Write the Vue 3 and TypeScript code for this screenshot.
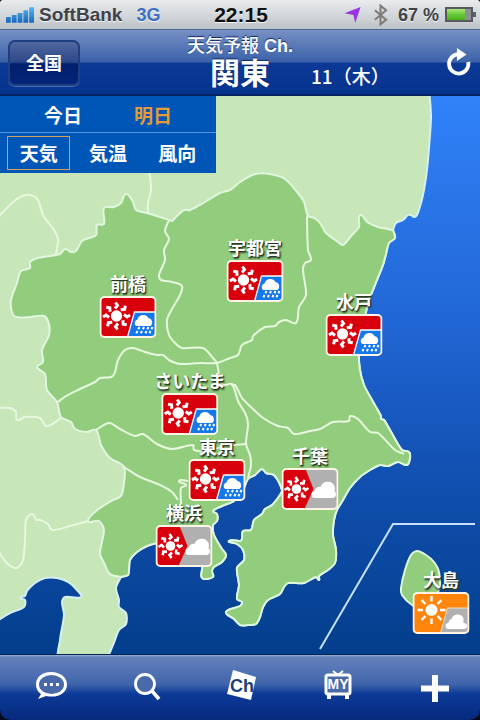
<script setup lang="ts">
import { ref } from 'vue'

type Weather = 'sun-rain' | 'sun-cloud' | 'fine-cloud'
interface City { name: string; x: number; y: number; weather: Weather }

const MAP_W = 480
const MAP_H = 558

const days = ['今日', '明日']
const modes = ['天気', '気温', '風向']
const day = ref('明日')
const mode = ref('天気')

// x is the centre of the badge, y its bottom edge, in map units
const cities: City[] = [
  { name: '宇都宮', x: 255, y: 206, weather: 'sun-rain' },
  { name: '前橋', x: 128, y: 242, weather: 'sun-rain' },
  { name: '水戸', x: 354, y: 260, weather: 'sun-rain' },
  { name: 'さいたま', x: 190, y: 339, weather: 'sun-rain' },
  { name: '東京', x: 217, y: 405, weather: 'sun-rain' },
  { name: '千葉', x: 310, y: 414, weather: 'sun-cloud' },
  { name: '横浜', x: 184, y: 471, weather: 'sun-cloud' },
  { name: '大島', x: 441, y: 538, weather: 'fine-cloud' },
]

function place(c: City) {
  return { left: `${(c.x / MAP_W) * 100}%`, top: `${(c.y / MAP_H) * 100}%` }
}

// Turns "x,y x,y ..." into a gently rounded path through every point
function smooth(points: string, closed = false): string {
  const p = points.trim().split(/\s+/).map(s => s.split(',').map(Number))
  const n = p.length
  const at = (i: number) => (closed ? p[(i + n) % n] : p[Math.max(0, Math.min(n - 1, i))])
  let d = `M${p[0][0]} ${p[0][1]}`
  for (let i = 0; i < (closed ? n : n - 1); i++) {
    const [a, b, c, e] = [at(i - 1), at(i), at(i + 1), at(i + 2)]
    const k = Math.hypot(c[0] - b[0], c[1] - b[1]) * 0.28
    const u = Math.hypot(c[0] - a[0], c[1] - a[1]) || 1
    const v = Math.hypot(e[0] - b[0], e[1] - b[1]) || 1
    d += `C${b[0] + ((c[0] - a[0]) / u) * k} ${b[1] + ((c[1] - a[1]) / u) * k} ${c[0] - ((e[0] - b[0]) / v) * k} ${c[1] - ((e[1] - b[1]) / v) * k} ${c[0]} ${c[1]}`
  }
  return closed ? d + 'Z' : d
}

const northCoast = '426,82 429,92 431,115 430,135 427,170 424,190 421,203 417,215 414,217 411,215 408,215 403,220 396,223 393,230'
const eastCoast = '393,230 395,238 389,243 386,254 383,265 377,280 369,300 366,312 359,350 360,370 364,385 372,400 381,416 381,419 384,420 390,430 402,450 409,452 410,458 407,465 398,462 388,466 380,465 370,470 360,477 350,488 343,500 337,510 334,520 333,535 336,550 335,563 328,570 319,576 319,580 316,577 304,583 288,583 284,587 280,594 268,600 263,607 260,617 256,624 248,625 240,625 234,619 226,612 240,606 242,602 237,599 239,585 237,568 244,560 243,550 237,544 229,541 240,541 242,539 243,531 251,530 254,520 262,514 265,509 272,505 280,495 282,490 274,475 266,473 262,469 255,475 248,479 243,490 234,501 222,506 213,511 217,514 217,521 213,525 214,535 222,549 226,555 222,562 214,567 212,571 213,577 202,578 202,566 190,545 170,541 157,543 147,546 137,552 130,560 129,570 128,575 121,577'
const southCoast = '121,577 116,588 119,600 119,607 126,613 126,624 119,630 113,645 104,660 60,660 60,640 64,615 62,602 65,597 81,597 77,590 68,582 57,578 45,578 35,583 27,591 25,596 20,598 25,600 24,607 10,613 -4,619 -4,82'
const kantoNorth = '393,230 378,227 367,222 360,215 359,227 352,235 343,245 338,242 326,233 320,223 314,218 308,216 304,202 297,192 285,179 270,174 255,174 240,182 230,190 220,193 205,202 190,210 184,210 177,216 172,221 169,220'
const kantoWest = '169,220 160,217 147,213 136,210 133,202 126,194 121,203 114,207 104,208 104,224 97,225 96,235 82,241 76,251 71,252 65,249 60,254 38,258 30,262 30,268 21,271 17,283 11,300 12,312 16,317 30,317 44,316 49,324 49,335 42,350 43,362 37,367 45,374 47,390 57,402 61,417 71,422 75,429 87,432 96,430 101,445 110,458 124,467 123,490 120,497 113,500 100,508 88,521 99,521 104,530 100,553 104,563 110,574 121,577'

const land = smooth(`${northCoast} ${eastCoast} ${southCoast}`, true)
const kanto = smooth(`${eastCoast} ${kantoWest.split(' ').reverse().join(' ')} ${kantoNorth.split(' ').reverse().join(' ')}`, true)
const island = smooth('417,551 426,555 434,562 439,572 439,590 425,610 412,605 402,595 401,588 405,570 411,555', true)

const borders = [
  '169,220 165,231 169,239 164,250 165,260 159,275 161,280 172,282 182,286 180,295 172,309 167,320 169,335 175,343 182,348 203,348 213,358 217,363',
  '58,402 66,396 80,389 95,382 100,378 113,376 118,360 125,350 133,348 145,352 157,355 163,355 169,360 180,364 200,363 217,363 230,358 238,355 242,345 252,340 253,336 265,327 275,326 279,322 286,320 296,323 299,307 306,295 303,270 305,263 311,260 308,250 307,216',
  '217,363 219,375 218,381 225,385 232,384 238,401 246,415 248,425 246,444 250,455 251,465 248,478',
  '231,385 235,385 242,398 252,408 263,418 278,426 288,428 294,434 310,431 320,429 333,422 349,421 350,416 358,419 370,432 378,433 395,450 404,454',
  '96,430 109,423 120,429 135,436 143,434 157,444 172,449 193,445 194,450 208,451 225,446 246,444',
  '124,467 140,477 160,485 172,492 178,500',
  '181,504 181,488 186,485 179,481 188,481',
  '149,168 151,190 148,203 148,214',
  '-2,217 12,203 20,197 30,195 38,200 43,215 54,230 58,240 56,254',
  '-2,408 10,408 16,412 17,420 25,417 40,418 46,426 54,423 61,418',
  '88,521 70,526 52,530 48,524 40,520 36,520 34,515 31,514 26,520 25,540 23,560 17,568 9,565 2,557 -2,550',
].map(b => smooth(b))
</script>

<template>
  <div class="phone">
    <div class="status">
      <div class="carrier">
        <svg class="signal" viewBox="0 0 30 16" aria-hidden="true">
          <defs>
            <linearGradient id="bars" x1="0" y1="0" x2="0" y2="1">
              <stop offset="0" stop-color="#55b4ee" /><stop offset="1" stop-color="#1767ba" />
            </linearGradient>
          </defs>
          <path fill="url(#bars)" d="M0 10h5v6H0zM6 8h5v8H6zM12 6h5v10h-5zM18 3h5v13h-5zM24 0h5v16h-5z" />
        </svg>
        <span>SoftBank</span>
        <span class="network">3G</span>
      </div>
      <time class="clock">22:15</time>
      <div class="power">
        <svg class="locate" viewBox="0 0 20 20" aria-hidden="true"><path fill="#9b35e0" d="M19 1 13 19 11 10 1 8z" /></svg>
        <svg class="bluetooth" viewBox="0 0 16 22" aria-hidden="true"><path fill="none" stroke="#817c7b" stroke-width="2.2" d="M2 6l12 10-6 5V1l6 5L2 16" /></svg>
        <span class="percent">67 %</span>
        <svg class="battery" viewBox="0 0 31 15" aria-hidden="true">
          <defs>
            <linearGradient id="charge" x1="0" y1="0" x2="0" y2="1">
              <stop offset="0" stop-color="#a9e77c" /><stop offset="0.5" stop-color="#67c936" /><stop offset="1" stop-color="#48ad20" />
            </linearGradient>
          </defs>
          <rect x="1" y="1" width="26" height="13" fill="#8b9096" stroke="#55595e" stroke-width="2" />
          <rect x="2" y="2" width="18" height="11" fill="url(#charge)" />
          <path fill="#5b6066" d="M28 5h3v5h-3z" />
        </svg>
      </div>
    </div>

    <header class="bar">
      <div><button class="back" type="button">全国</button></div>
      <div class="title">
        <p>天気予報 <b>Ch.</b></p>
        <h1>関東</h1>
      </div>
      <div class="right">
        <span class="date">11（木）</span>
        <button class="reload" type="button" aria-label="更新">
          <svg viewBox="0 0 26 28"><path fill="none" stroke="#fff" stroke-width="3.6" d="M13 6.800A9 9 0 1 0 22.500 14" /><path fill="#fff" d="M12 1v12l9-6z" /></svg>
        </button>
      </div>
    </header>

    <main class="map">
      <svg class="terrain" viewBox="0 96 480 558" aria-hidden="true">
        <path class="far" :d="land" />
        <path class="near" :d="kanto" />
        <path class="near" :d="island" />
        <path v-for="(b, i) in borders" :key="i" class="border" :d="b" />
        <path class="inset" d="M320 649 393 524H475" />
      </svg>

      <nav class="panel">
        <div class="days">
          <button v-for="d in days" :key="d" type="button" :class="{ on: d === day }" @click="day = d">{{ d }}</button>
        </div>
        <div class="modes">
          <button v-for="m in modes" :key="m" type="button" :class="{ boxed: m === mode }" @click="mode = m">{{ m }}</button>
        </div>
      </nav>

      <div v-for="c in cities" :key="c.name" class="city" :style="place(c)">
        <span>{{ c.name }}</span>
        <svg class="badge" viewBox="0 0 57 42" aria-hidden="true">
          <template v-if="c.weather === 'sun-rain'">
            <rect x="1" y="1" width="55" height="40" rx="4" fill="#d8000c" />
            <path fill="#1478ea" d="M35 16H56V38Q56 41 53 41H28z" />
            <path fill="none" stroke="#fff" stroke-width="1.300" d="M28 41 35 16H56" />
            <g transform="translate(17 20)">
              <circle r="5.700" fill="#fff" />
              <path v-for="n in 8" :key="n" :transform="`rotate(${n * 45})`" fill="none" stroke="#fff" stroke-width="3" d="M-1.500 -7.500 1 -10.500 -1 -13.500" />
            </g>
            <path fill="#fff" d="M37 30a3.500 3.500 0 0 1 1-6.500 6 6 0 0 1 11-1.500 4.500 4.500 0 0 1 2 8z" />
            <path fill="none" stroke="#fff" stroke-width="2" stroke-dasharray="2.500 2" d="M40 31 36 39M44.500 31 40.500 39M49 31 45 39M53 31 49 39" />
          </template>
          <template v-else-if="c.weather === 'sun-cloud'">
            <rect x="1" y="1" width="55" height="40" rx="4" fill="#b0b0b0" />
            <path fill="#d8000c" d="M5 1H24L32 21 23 41H5Q1 41 1 37V5Q1 1 5 1z" />
            <g transform="translate(15 21)">
              <circle r="4.800" fill="#fff" />
              <path v-for="n in 8" :key="n" :transform="`rotate(${n * 45})`" fill="none" stroke="#fff" stroke-width="2.600" d="M-1.500 -6.500 1 -9 -1 -12" />
            </g>
            <path fill="#fff" d="M34 30a3.500 3.500 0 0 1-1-7 5 5 0 0 1 6-4 7.500 7.500 0 0 1 14-1 8 8 0 0 1 0 5 4 4 0 0 1-1 7z" />
          </template>
          <template v-else>
            <rect x="1" y="1" width="55" height="40" rx="4" fill="#ff850c" />
            <path fill="#b0b0b0" d="M35 16H56V38Q56 41 53 41H28z" />
            <path fill="none" stroke="#ffe0bd" stroke-width="1" d="M28 41 35 16H56" />
            <g transform="translate(19 18)">
              <circle r="6" fill="#fff" />
              <path v-for="n in 8" :key="n" :transform="`rotate(${n * 45})`" stroke="#fff" stroke-width="2.400" d="M0 -8.500V-14" />
            </g>
            <path fill="#fff" d="M36 37a3 3 0 0 1 0-6 4 4 0 0 1 3-4 6.500 6.500 0 0 1 12-1v5a3 3 0 0 1 1 6z" />
          </template>
          <rect class="frame" x="1" y="1" width="55" height="40" rx="4" />
        </svg>
      </div>
    </main>

    <nav class="tabs">
      <button type="button" aria-label="コメント">
        <svg viewBox="0 0 40 40"><path fill="#fff" d="M20 6C11 6 5 11 5 18.500c0 4.500 2 7.500 5 9.500l-3 5 8-3c12 2.500 21-3 21-11.500C36 11 29 6 20 6z" /><ellipse cx="20.500" cy="18.500" rx="12.500" ry="9.500" fill="#4a69a9" /><path fill="#fff" d="M13 17h3v3h-3zM19 17h3v3h-3zM25 17h3v3h-3z" /></svg>
      </button>
      <button type="button" aria-label="検索">
        <svg viewBox="0 0 40 40"><circle cx="18" cy="18" r="9.500" fill="#4a69a9" stroke="#fff" stroke-width="2.800" /><path stroke="#fff" stroke-width="3.600" d="M25 25 32 33" /></svg>
      </button>
      <button type="button" aria-label="チャンネル">
        <svg viewBox="0 0 40 40"><path fill="#fff" d="M10 4 33 11 28 34 4 28z" /><text x="19" y="26" class="ch">Ch</text></svg>
      </button>
      <button type="button" aria-label="マイページ">
        <svg viewBox="0 0 40 40"><path fill="none" stroke="#fff" stroke-width="2" d="M14 5 19 9 24 5" /><rect x="7" y="9" width="24" height="19" rx="2" fill="#4a69a9" stroke="#fff" stroke-width="3" /><path fill="#fff" d="M8 28h4v5H8zM26 28h4v5h-4z" /><text x="19" y="23" class="my">MY</text></svg>
      </button>
      <button type="button" aria-label="追加">
        <svg viewBox="0 0 40 40"><path stroke="#fff" stroke-width="6" d="M20 9V36M6 22.500H34" /></svg>
      </button>
    </nav>
  </div>
</template>

<style>
body { margin: 0; background: #050b1c; }
</style>

<style scoped>
.phone {
  display: flex;
  flex-direction: column;
  min-height: 100vh;
  overflow: hidden;
  font-family: "Liberation Sans", "Noto Sans CJK JP", sans-serif;
  border-radius: 3px 3px 10px 10px;
}
button {
  margin: 0;
  padding: 0;
  border: 0;
  background: none;
  color: #fff;
  font: inherit;
  cursor: pointer;
}
p, h1 { margin: 0; }

.status {
  display: grid;
  grid-template-columns: 1fr auto 1fr;
  align-items: center;
  box-sizing: border-box;
  height: 29px;
  padding: 0 4px 0 6px;
  background: linear-gradient(#e9ebec, #cfd4d8 60%, #bbc2c6);
  color: #3f4246;
  font-size: 19px;
  font-weight: bold;
  line-height: 28px;
  text-shadow: 0 1px 0 #f4f6f7;
}
.carrier, .power { display: flex; align-items: center; }
.carrier { gap: 4px; }
.signal { width: 29px; height: 16px; }
.network { margin-left: 10px; color: #3b6fc0; font-size: 18px; }
.clock { color: #111; font-size: 21px; }
.power { justify-content: flex-end; gap: 6px; }
.locate { width: 19px; height: 18px; margin-right: 5px; }
.bluetooth { width: 15px; height: 22px; margin-right: 4px; }
.percent { font-size: 18px; white-space: nowrap; }
.battery { width: 31px; height: 15px; }

.bar {
  display: grid;
  grid-template-columns: 1fr auto 1fr;
  box-sizing: border-box;
  height: 67px;
  padding: 0 8px;
  border-top: 1px solid #536991;
  border-bottom: 2px solid #06245f;
  background: linear-gradient(#7690c3 0, #3c62aa 50%, #0b3995 52%, #06338e 100%);
  color: #fff;
}
.back {
  width: 72px;
  height: 46px;
  margin-top: 10px;
  padding-bottom: 3px;
  border: 2px solid #213e80;
  border-radius: 7px;
  background: linear-gradient(#51679f 0, #2c4888 48%, #02206d 52%, #04247a 100%);
  box-shadow: 0 1px 0 #4770b8;
  font-size: 18px;
  font-weight: bold;
}
.title { text-align: center; text-shadow: 0 -1px 1px #0b2866; }
.title p { padding-top: 4px; font-size: 18px; font-weight: 500; line-height: 25px; }
.title h1 { font-size: 30px; font-weight: bold; line-height: 30px; }
.right { display: flex; justify-content: space-between; padding-left: 18px; }
.date { padding-top: 32px; font-family: "Noto Sans CJK JP", sans-serif; font-size: 19px; font-weight: 500; line-height: 28px; white-space: nowrap; }
.reload { align-self: center; width: 28px; height: 30px; }
.reload svg { display: block; width: 28px; height: 30px; }

.map {
  position: relative;
  flex: 1 0 auto;
  background: linear-gradient(#3182f8, #2268d8 38%, #1250b1 68%, #033e8c);
}
.terrain { display: block; width: 100%; height: auto; }
.far { fill: #c7e7b8; stroke: #d4f0f2; stroke-width: 2; }
.near { fill: #91cd7c; stroke: #e0f6df; stroke-width: 2; }
.border { fill: none; stroke: #e8f7df; stroke-width: 2; stroke-linejoin: round; }
.inset { fill: none; stroke: #c7e1fa; stroke-width: 2; }

.panel {
  position: absolute;
  top: 0;
  left: 0;
  width: 216px;
  background: #0056b7;
  color: #fff;
  font-size: 19px;
  font-weight: bold;
}
.days, .modes { display: grid; box-sizing: border-box; }
.days { grid-template-columns: 1fr 1fr; height: 37px; padding: 0 18px; border-bottom: 1px solid #5594dc; }
.modes { grid-template-columns: repeat(3, 1fr); gap: 6px; height: 40px; padding: 3px 7px; }
.modes button { padding-bottom: 2px; border: 1px solid transparent; }
.modes .boxed { border-color: #d4a15b; }
.days .on { color: #e59a35; }

.city {
  position: absolute;
  display: flex;
  flex-direction: column;
  align-items: center;
  transform: translate(-50%, -100%);
  color: #fff;
  font-size: 18px;
  font-weight: bold;
  line-height: 22px;
  white-space: nowrap;
  text-shadow: 1px 1px 1px #24331f, 1px 2px 2px #384c35;
}
.badge { display: block; width: 57px; height: 42px; }
.frame { fill: none; stroke: #fff4e6; stroke-width: 2; }

.tabs {
  display: grid;
  grid-template-columns: repeat(5, 1fr);
  box-sizing: border-box;
  height: 66px;
  border-top: 1px solid #052456;
  border-radius: 0 0 10px 10px;
  background: linear-gradient(#9db2d5 0, #6682bc 3%, #3f64ab 45%, #0c3a98 60%, #062a7c 100%);
}
.tabs button { display: grid; place-items: center; padding: 0 0 4px 6px; }
.tabs svg { width: 40px; height: 40px; }
.ch { fill: #203f78; font-size: 18px; font-weight: bold; text-anchor: middle; }
.my { fill: #fff; font-size: 14px; font-weight: bold; text-anchor: middle; }
</style>
